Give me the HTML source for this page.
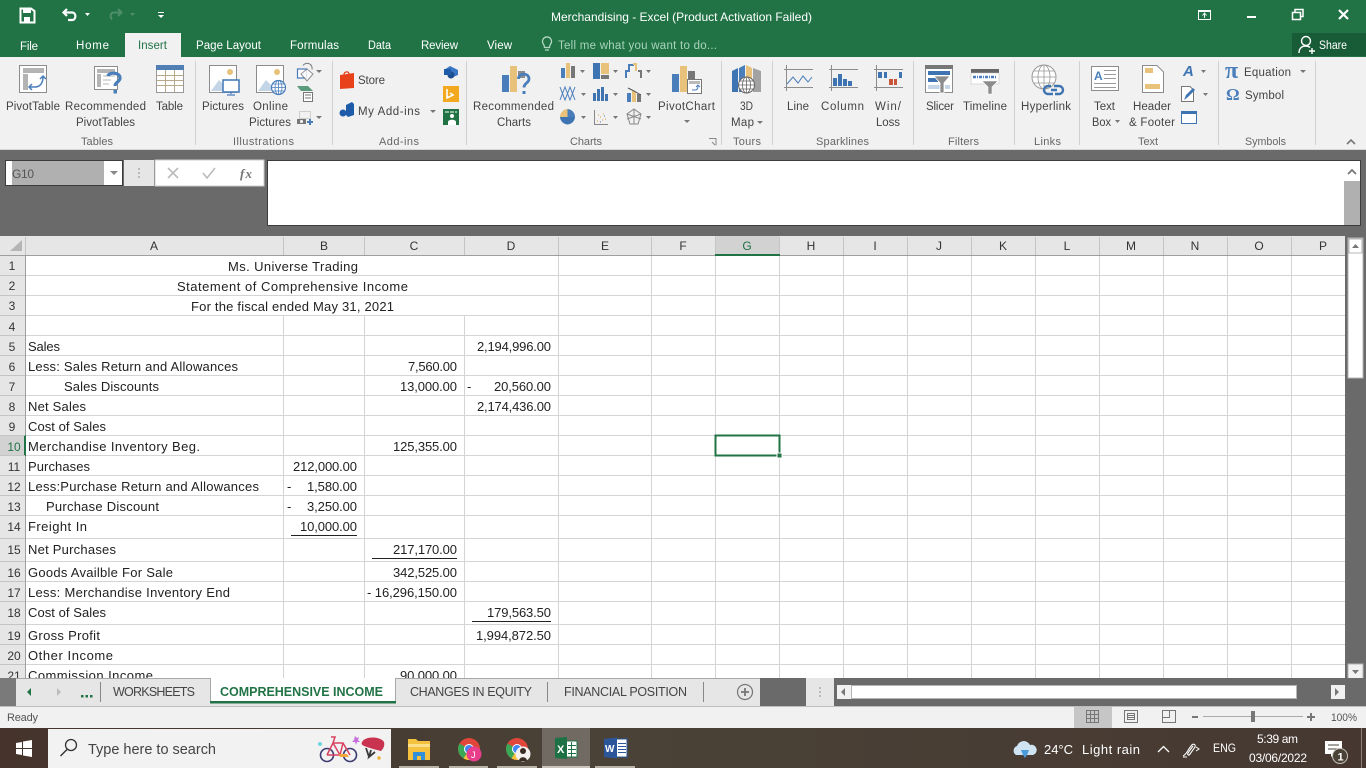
<!DOCTYPE html>
<html><head><meta charset="utf-8"><title>Merchandising - Excel</title>
<style>
html,body{margin:0;padding:0;background:#6a6a6a;width:1366px;height:768px;overflow:hidden}
svg{display:block;position:absolute;left:0;top:0}
text{font-family:"Liberation Sans",sans-serif}
.w{fill:#fff;font-size:12px}
.t{fill:#fff;font-size:11.5px}
.r{fill:#444;font-size:11.5px}
.g{fill:#666;font-size:11px}
.c{fill:#222;font-size:13px}
.h{fill:#333;font-size:12px;text-anchor:middle}
.b{fill:#fff;font-size:14px}
.ln{shape-rendering:crispEdges;fill:none}
</style></head><body>
<svg width="1366" height="768" viewBox="0 0 1366 768" xmlns="http://www.w3.org/2000/svg">
<!-- title bar -->
<rect width="1366" height="57" fill="#217346"/>
<rect y="57" width="1366" height="93" fill="#f1f1f1"/>
<rect y="149" width="1366" height="1" fill="#d8d8d8"/>
<rect y="150" width="1366" height="528" fill="#6a6a6a"/>
<!-- QAT -->
<path d="M20.500 8.500H31L34.500 11V22.500H20.500Z" fill="none" stroke="#fff" stroke-width="2"/>
<rect x="23" y="9" width="8" height="4" fill="#fff"/><rect x="24" y="17" width="6" height="5" fill="#fff"/>
<path d="M67 9L63.500 12.500L67 16M64 12.500H72C76.500 12.500 76.500 20 72 20H68" fill="none" stroke="#fff" stroke-width="2.200"/>
<path d="M85 13h5l-2.500 3z" fill="#fff"/>
<path d="M118 9l3.500 3.500L118 16M121 12.500h-7c-3.500 0-4.500 4-2 7" fill="none" stroke="#4f8e6b" stroke-width="2"/>
<path d="M130 13h5l-2.500 3z" fill="#4f8e6b"/>
<path d="M158 12h6v1h-6zM158 15h6l-3 3z" fill="#fff"/>
<text x="551" y="21" class="w" textLength="261">Merchandising - Excel (Product Activation Failed)</text>
<!-- window buttons -->
<rect x="1198.500" y="10.500" width="12" height="9" fill="none" stroke="#fff"/><rect x="1198" y="10" width="13" height="2" fill="#fff"/><path d="M1204.500 18v-4M1202.500 15.500l2-2.500 2 2.500" fill="none" stroke="#fff"/>
<rect x="1247" y="16" width="9" height="2" fill="#fff"/>
<rect x="1292.500" y="12.500" width="8" height="7" fill="#217346" stroke="#fff" stroke-width="1.500"/><path d="M1295 12v-2.500h8v7h-2.500" fill="none" stroke="#fff" stroke-width="1.500"/>
<path d="M1339 10l9 9M1348 10l-9 9" stroke="#fff" stroke-width="2.200"/>
<!-- tabs -->
<rect x="1292" y="33" width="74" height="23" fill="#185c37"/>
<rect x="125" y="33" width="56" height="24" fill="#f1f1f1"/>
<text x="20" y="50" class="t" textLength="18">File</text>
<text x="76" y="49" class="t" textLength="33">Home</text>
<text x="138" y="49" fill="#217346" font-size="11.500" textLength="29">Insert</text>
<text x="196" y="49" class="t" textLength="65">Page Layout</text>
<text x="290" y="49" class="t" textLength="49">Formulas</text>
<text x="368" y="49" class="t" textLength="23" lengthAdjust="spacingAndGlyphs">Data</text>
<text x="421" y="49" class="t" textLength="37">Review</text>
<text x="487" y="49" class="t" textLength="25">View</text>
<path d="M543 43.500a4.500 4.500 0 1 1 8 0c-1 1.500-1.500 2-1.500 4h-5c0-2-.5-2.500-1.500-4zM545 50h4" fill="none" stroke="#b5d8c4" stroke-width="1.300"/>
<text x="558" y="49" fill="#a9d3bb" font-size="11.500" textLength="159">Tell me what you want to do...</text>
<circle cx="1306" cy="41" r="4.500" fill="none" stroke="#fff" stroke-width="1.400"/><path d="M1299 53c0-5 3-7 7-7 2 0 3 .5 4 1.500M1309 51h6M1312 48v6" fill="none" stroke="#fff" stroke-width="1.400"/>
<text x="1319" y="49" class="t" textLength="28" lengthAdjust="spacingAndGlyphs">Share</text>

<!-- ribbon separators -->
<path class="ln" stroke="#d0d0d0" d="M195.500 61V145M332.500 61V145M466.500 61V145M721.500 61V145M772.500 61V145M913.500 61V145M1014.500 61V145M1079.500 61V145M1218.500 61V145M1315.500 61V145"/>

<!-- ribbon labels -->
<text x="6" y="110" class="r" textLength="54">PivotTable</text>
<text x="65" y="110" class="r" textLength="81">Recommended</text>
<text x="76" y="126" class="r" textLength="59">PivotTables</text>
<text x="156" y="110" class="r" textLength="27">Table</text>
<text x="202" y="110" class="r" textLength="42">Pictures</text>
<text x="253" y="110" class="r" textLength="35">Online</text>
<text x="249" y="126" class="r" textLength="42">Pictures</text>
<text x="358" y="84" class="r" textLength="27">Store</text>
<text x="358" y="115" class="r" textLength="62">My Add-ins</text>
<text x="473" y="110" class="r" textLength="81">Recommended</text>
<text x="497" y="126" class="r" textLength="34">Charts</text>
<text x="658" y="110" class="r" textLength="57">PivotChart</text>
<text x="740" y="110" class="r" textLength="13" lengthAdjust="spacingAndGlyphs">3D</text>
<text x="731" y="126" class="r" textLength="23">Map</text>
<text x="787" y="110" class="r" textLength="22">Line</text>
<text x="821" y="110" class="r" textLength="43">Column</text>
<text x="875" y="110" class="r" textLength="26">Win/</text>
<text x="876" y="126" class="r" textLength="24">Loss</text>
<text x="926" y="110" class="r" textLength="28">Slicer</text>
<text x="963" y="110" class="r" textLength="44">Timeline</text>
<text x="1021" y="110" class="r" textLength="50">Hyperlink</text>
<text x="1094" y="110" class="r" textLength="21">Text</text>
<text x="1092" y="126" class="r" textLength="19" lengthAdjust="spacingAndGlyphs">Box</text>
<text x="1133" y="110" class="r" textLength="38">Header</text>
<text x="1129" y="126" class="r" textLength="46">&amp; Footer</text>
<text x="1244" y="76" class="r" textLength="47">Equation</text>
<text x="1245" y="99" class="r" textLength="39">Symbol</text>
<text x="81" y="145" class="g" textLength="32">Tables</text>
<text x="233" y="145" class="g" textLength="61">Illustrations</text>
<text x="379" y="145" class="g" textLength="40">Add-ins</text>
<text x="570" y="145" class="g" textLength="32">Charts</text>
<text x="733" y="145" class="g" textLength="28">Tours</text>
<text x="816" y="145" class="g" textLength="53">Sparklines</text>
<text x="948" y="145" class="g" textLength="31">Filters</text>
<text x="1034" y="145" class="g" textLength="27">Links</text>
<text x="1138" y="145" class="g" textLength="20">Text</text>
<text x="1245" y="145" class="g" textLength="41" lengthAdjust="spacingAndGlyphs">Symbols</text>

<!-- PivotTable icon -->
<rect x="19.500" y="65.500" width="27" height="27" fill="#fff" stroke="#8c8c8c"/>
<rect x="23" y="68" width="21" height="5" fill="#b4b4b4"/><rect x="23" y="74" width="5" height="16" fill="#b4b4b4"/>
<path d="M29 87h6c5 0 8-4 8-10M40 79l3-3 3 3M32 84l-3 3 3 3" fill="none" stroke="#4a7ebb" stroke-width="1.500"/>
<!-- Recommended Pivot -->
<rect x="94.500" y="66.500" width="23" height="23" fill="#fff" stroke="#8c8c8c"/>
<rect x="97" y="69" width="18" height="4" fill="#b4b4b4"/><rect x="97" y="74" width="4" height="13" fill="#b4b4b4"/><path d="M103 76h12M103 80h8M103 84h6" stroke="#b4b4b4"/>
<path d="M108 76c1-4 12-4 12 2 0 4-5 4-5 8" fill="none" stroke="#4a7ebb" stroke-width="3.200"/><rect x="113.500" y="90" width="3.500" height="3.500" fill="#4a7ebb"/>
<!-- Table icon -->
<rect x="156.500" y="65.500" width="27" height="27" fill="#fff" stroke="#999"/>
<rect x="156" y="65" width="28" height="5" fill="#4f7fb5"/>
<path class="ln" stroke="#b9a98a" d="M157 75.500H183M157 80.500H183M157 85.500H183M165.500 70V92M174.500 70V92"/>
<!-- Pictures -->
<rect x="209.500" y="65.500" width="27" height="27" fill="#fff" stroke="#8c8c8c"/>
<circle cx="230" cy="72" r="3" fill="#e8c27a"/><path d="M211 91l8-11 5 5 5-3 7 9z" fill="#c5d5e8"/>
<rect x="223" y="80" width="16" height="12" fill="#fff" stroke="#4a7ebb" stroke-width="1.600"/><path d="M231 92v2M227 95h8" stroke="#4a7ebb" stroke-width="1.300"/>
<!-- Online pictures -->
<rect x="256.500" y="65.500" width="27" height="27" fill="#fff" stroke="#8c8c8c"/>
<circle cx="277" cy="72" r="3" fill="#e8c27a"/><path d="M258 91l8-11 5 5 4-3 7 9z" fill="#c5d5e8"/>
<circle cx="278.500" cy="87.500" r="7" fill="#fff" stroke="#4a7ebb" stroke-width="1.200"/><path d="M271.500 87.500h14M278.500 80.500v14M273 84h11M273 91h11" stroke="#4a7ebb" stroke-width=".8"/><ellipse cx="278.500" cy="87.500" rx="3.500" ry="7" fill="none" stroke="#4a7ebb" stroke-width=".8"/>
<!-- Shapes -->
<path d="M297.500 69h9v9h-9z" fill="#fff" stroke="#4a7ebb" stroke-width="1.200"/><path d="M307 69l6 5-6 7-6-7z" fill="#fff" stroke="#777" stroke-width="1" opacity=".8"/><path d="M303 65.500a5 5 0 0 1 9 4" fill="none" stroke="#777"/>
<path d="M316 70h6l-3 3z" fill="#777"/>
<!-- Smart art -->
<path d="M297 86h11l5 5h-12z" fill="#5c9a7c"/><rect x="303.500" y="92.500" width="9" height="9" fill="#fff" stroke="#777"/><path d="M305 95h6M305 98h6" stroke="#777"/>
<!-- screenshot -->
<rect x="299.500" y="111.500" width="11" height="7" fill="none" stroke="#aaa" stroke-dasharray="1 1"/>
<path d="M297 119h9v5h-9z" fill="#777"/><circle cx="301.500" cy="121.500" r="1.500" fill="#fff"/><path d="M307 122h6M310 119v6" stroke="#4a7ebb" stroke-width="2"/>
<path d="M316 116h6l-3 3z" fill="#777"/>
<!-- Store -->
<path d="M340 75l14-2v15l-14 1z" fill="#e8421b"/><path d="M344 75c0-4 5-4 5-1" fill="none" stroke="#e8421b" stroke-width="1.300"/>
<!-- My Addins -->
<path d="M346 105l6-3 2 2v11l-6 2-2-2z" fill="#1e5ba8"/><circle cx="343" cy="113" r="3.500" fill="#1e5ba8"/>
<path d="M430 110h6l-3 3z" fill="#777"/>
<!-- Visio/Bing/People -->
<path d="M444 70l6-4 8 4v5l-5 2-5-2z" fill="#3b76c4"/><circle cx="451" cy="75" r="3.500" fill="#1e4c8f"/><path d="M444 69h7v6h-7z" fill="#1e5ba8"/>
<rect x="443" y="86" width="16" height="16" fill="#f2a81f"/><path d="M447 89v9l6-3-3-2" fill="none" stroke="#fff" stroke-width="1.600"/>
<rect x="443" y="109" width="16" height="16" fill="#217346"/><path d="M445 112h12" stroke="#fff" stroke-dasharray="4 1"/><circle cx="452" cy="116" r="2" fill="#fff"/><path d="M448 125v-3c0-3 8-3 8 0v3z" fill="#fff"/>
<!-- Rec charts -->
<rect x="502" y="75" width="7" height="17" fill="#4a7ebb"/><rect x="510" y="66" width="7" height="26" fill="#e8c27a"/><rect x="518" y="71" width="7" height="7" fill="#8c8c8c"/>
<path d="M518.500 79c0-6.500 10.500-6.500 10.500 0 0 4-5 4-5 8.500" fill="none" stroke="#4a7ebb" stroke-width="2.800"/><rect x="522.500" y="91" width="3" height="3" fill="#4a7ebb"/>
<!-- chart minis row 1 -->
<rect x="561" y="68" width="4" height="10" fill="#4a7ebb"/><rect x="566" y="63" width="4" height="15" fill="#e8c27a"/><rect x="571" y="66" width="4" height="12" fill="#777"/><path d="M580 70h5l-2.500 3z" fill="#777"/>
<rect x="593" y="63" width="7" height="16" fill="#3f74b3"/><rect x="601" y="63" width="8" height="11" fill="#e8c27a"/><rect x="601" y="75" width="8" height="4" fill="#777"/><path d="M613 70h5l-2.500 3z" fill="#777"/>
<path d="M626 78v-7h3v-6h4v-1" fill="none" stroke="#4a7ebb" stroke-width="2"/><path d="M633 64h3v7" fill="none" stroke="#e8c27a" stroke-width="2"/><path d="M638 71h3v7" fill="none" stroke="#777" stroke-width="2"/><path d="M646 70h5l-2.500 3z" fill="#777"/>
<!-- row 2 -->
<path d="M560 87l5 13 5-13 5 13M560 100l5-13 5 13 5-13" fill="none" stroke="#4a7ebb" stroke-width="1"/><path d="M581 93h5l-2.500 3z" fill="#777"/>
<rect x="593" y="93" width="3" height="8" fill="#3f74b3"/><rect x="597" y="89" width="3" height="12" fill="#3f74b3"/><rect x="601" y="87" width="3" height="14" fill="#3f74b3"/><rect x="605" y="94" width="3" height="7" fill="#3f74b3"/><path d="M613 93h5l-2.500 3z" fill="#777"/>
<rect x="627" y="93" width="4" height="9" fill="#4a7ebb"/><rect x="632" y="91" width="4" height="11" fill="#e8c27a"/><rect x="637" y="94" width="4" height="8" fill="#777"/><path d="M628 88l6 3 7 4" fill="none" stroke="#555"/><path d="M646 93h5l-2.500 3z" fill="#777"/>
<!-- row 3 -->
<path d="M567.500 117L567.500 109A8 8 0 0 1 575 117Z" fill="#4a7ebb"/><path d="M567.500 117V109A8 8 0 0 0 560 117Z" fill="#e8c27a"/><path d="M567.500 117H560A8 8 0 0 0 567.500 124.500A8 8 0 0 0 575 117Z" fill="#3f74b3"/><path d="M581 116h5l-2.500 3z" fill="#777"/>
<path d="M594.500 110v14.500H608" fill="none" stroke="#888"/><path d="M597 121h1M600 117h1M603 114h1M605 119h1M598 115h1M602 120h1" stroke="#e09a3c"/><path d="M600 122h1M604 116h1" stroke="#4a7ebb"/><path d="M613 116h5l-2.500 3z" fill="#777"/>
<path d="M634 109l7 5-3 10h-8l-3-10zM634 109v15M627 114l14 5M641 114l-14 5" fill="none" stroke="#888"/><path d="M646 116h5l-2.500 3z" fill="#777"/>
<!-- PivotChart -->
<rect x="672" y="74" width="7" height="18" fill="#4a7ebb"/><rect x="680" y="66" width="7" height="26" fill="#e8c27a"/><rect x="688" y="71" width="7" height="10" fill="#777"/>
<rect x="687.500" y="79.500" width="14" height="14" fill="#fff" stroke="#777"/><rect x="689" y="81" width="11" height="3" fill="#bbb"/><path d="M692 90h3c2 0 3-1 3-4M696 87l2-2 2 2" fill="none" stroke="#4a7ebb"/>
<path d="M684 120h6l-3 3z" fill="#777"/>
<!-- 3D Map -->
<path d="M732 71l6-3v24h-6z" fill="#3f74b3"/><path d="M739 68l6-3v27h-6z" fill="#4a7ebb"/><path d="M746 65l6 3v24h-6z" fill="#e8c27a"/><path d="M753 68l8 3v21h-8z" fill="#a2a2a2"/>
<circle cx="746.500" cy="85" r="8" fill="#fff" stroke="#666"/><path d="M738.500 85h16M746.500 77v16M740 81h13M740 89h13" stroke="#666" stroke-width=".8"/><ellipse cx="746.500" cy="85" rx="4" ry="8" fill="none" stroke="#666" stroke-width=".8"/>
<path d="M757 121h6l-3 3z" fill="#777"/>
<!-- Sparkline line -->
<path class="ln" stroke="#8c8c8c" d="M784 69.500H813M784 87.500H813M786.500 65V91"/>
<path d="M787 84l6-7 5 6 5-7 5 6 4-5" fill="none" stroke="#4a7ebb" stroke-width="1"/>
<path class="ln" stroke="#8c8c8c" d="M829 69.500H858M829 87.500H858M831.500 65V91"/>
<rect x="833" y="78" width="4" height="8" fill="#3f74b3"/><rect x="838" y="74" width="4" height="12" fill="#3f74b3"/><rect x="843" y="79" width="4" height="7" fill="#3f74b3"/><rect x="848" y="81" width="4" height="5" fill="#3f74b3"/>
<path class="ln" stroke="#8c8c8c" d="M874 69.500H903M874 87.500H903M876.500 65V91"/>
<rect x="878" y="72" width="4" height="6" fill="#3f74b3"/><rect x="884" y="72" width="3" height="6" fill="#3f74b3"/><rect x="889" y="79" width="4" height="6" fill="#c8553a"/><rect x="894" y="79" width="3" height="6" fill="#c8553a"/><rect x="899" y="72" width="3" height="6" fill="#3f74b3"/>
<!-- Slicer -->
<rect x="925.500" y="65.500" width="27" height="27" fill="#fff" stroke="#8c8c8c"/><rect x="925" y="65" width="28" height="4" fill="#777"/>
<rect x="928" y="71" width="22" height="4" fill="#3f74b3"/><rect x="928" y="78" width="10" height="4" fill="#3f74b3"/><rect x="928" y="85" width="14" height="4" fill="#c5d5e8"/><rect x="945" y="85" width="5" height="4" fill="#c5d5e8"/>
<path d="M934 76h16l-6 7v10h-4V83z" fill="#8c8c8c" stroke="#fff" stroke-width=".8"/>
<!-- Timeline -->
<rect x="971" y="69" width="28" height="4" fill="#666"/><rect x="971" y="73" width="28" height="11" fill="#fff" stroke="#bbb" stroke-width=".5"/><path d="M973 77h5M979 77h5M985 77h5M991 77h5" stroke="#4a7ebb" stroke-width="2.500" stroke-dasharray="3 1"/>
<path d="M982 81h16l-6 6v7h-4v-7z" fill="#8c8c8c" stroke="#fff" stroke-width=".6"/>
<!-- Hyperlink -->
<circle cx="1044" cy="77" r="12" fill="#fff" stroke="#999"/><path d="M1032 77h24M1044 65v24M1034 71h20M1034 83h20" stroke="#999" stroke-width=".8"/><ellipse cx="1044" cy="77" rx="6" ry="12" fill="none" stroke="#999" stroke-width=".8"/>
<path d="M1051 86h-3a4 4 0 0 0 0 8h5M1054 86h5a4 4 0 0 1 0 8h-4M1051 90h6" fill="none" stroke="#3f74b3" stroke-width="2.400"/>
<!-- Text box -->
<rect x="1091.500" y="66.500" width="27" height="24" fill="#fff" stroke="#8c8c8c"/>
<text x="1094" y="80" fill="#4a7ebb" font-size="12" font-weight="bold">A</text>
<path class="ln" stroke="#999" d="M1104 70.500H1116M1104 74.500H1116M1104 78.500H1116M1094 83.500H1116M1094 87.500H1116"/>
<!-- Header -->
<path d="M1142.500 65.500H1157L1163.500 72V92.500H1142.500Z" fill="#fff" stroke="#8c8c8c"/>
<rect x="1145" y="68" width="8" height="5" fill="#e8c27a"/><rect x="1145" y="84" width="15" height="5" fill="#e8c27a"/>
<!-- wordart etc -->
<text x="1183" y="76" fill="#3f74b3" font-size="15" font-weight="bold" font-style="italic">A</text><path d="M1201 70h5l-2.500 3z" fill="#777"/>
<path d="M1181.500 86.500H1190L1193.500 90V101.500H1181.500Z" fill="#fff" stroke="#777"/><path d="M1184 100l2-5 7-7 2 2-7 7z" fill="#3f74b3"/><path d="M1203 93h5l-2.500 3z" fill="#777"/>
<rect x="1181.500" y="111.500" width="15" height="12" fill="#fff" stroke="#3f74b3"/><rect x="1181" y="111" width="16" height="3" fill="#3f74b3"/>
<path d="M1115 120h5l-2.500 3z" fill="#777"/>
<!-- symbols -->
<text x="1225" y="78" fill="#4a7ebb" font-size="24" font-weight="bold" style="font-family:'Liberation Serif',serif">π</text>
<text x="1226" y="100" fill="#4a7ebb" font-size="17" font-weight="bold" style="font-family:'Liberation Serif',serif">Ω</text>
<path d="M1300 70h6l-3 3z" fill="#777"/>
<path d="M1347 144l4-4 4 4" fill="none" stroke="#777" stroke-width="1.600"/>
<path d="M709 138.500h7v7M712 142l3 3" fill="none" stroke="#888"/>

<!-- formula bar -->
<rect x="5.500" y="160.500" width="117" height="25" fill="#fff" stroke="#3c3c3c"/>
<rect x="12" y="161" width="92" height="24" fill="#b0b0b0"/>
<text x="12" y="178" fill="#555" font-size="12" textLength="22">G10</text>
<path d="M110 171h8l-4 4z" fill="#888"/>
<rect x="124" y="160" width="30" height="26" fill="#e6e6e6"/>
<path d="M139 168v2M139 172v2M139 176v2" stroke="#aaa" stroke-width="1.500"/>
<rect x="155" y="160" width="109" height="26" fill="#fff" stroke="#ccc"/>
<path d="M168 168l10 10M178 168l-10 10" stroke="#bbb" stroke-width="1.600"/>
<path d="M203 173l4 5 8-10" fill="none" stroke="#bbb" stroke-width="1.600"/>
<text x="240" y="178" fill="#777" font-size="13" font-style="italic" font-weight="bold" style="font-family:'Liberation Serif',serif" textLength="12">fx</text>
<rect x="267.500" y="160.500" width="1093" height="65" fill="#fff" stroke="#3c3c3c"/>
<rect x="1344" y="161" width="16" height="20" fill="#fff"/>
<rect x="1344" y="181" width="16" height="44" fill="#b0b0b0"/>
<path d="M1348 174l4-4 4 4" fill="none" stroke="#777" stroke-width="1.800"/>

<!-- sheet -->
<rect x="0" y="236" width="1345" height="19" fill="#e6e6e6"/>
<rect x="0" y="255" width="25" height="423" fill="#e6e6e6"/>
<rect x="25" y="255" width="1320" height="423" fill="#fff"/>
<path d="M22 240v11H10z" fill="#b5b5b5"/>
<rect x="715" y="236" width="64" height="19" fill="#d2d2d2"/>
<rect x="715" y="254" width="65" height="2" fill="#217346"/>
<rect x="0" y="435" width="25" height="20" fill="#d2d2d2"/>
<rect x="24" y="435" width="2" height="21" fill="#217346"/>
<!-- grid -->
<path class="ln" stroke="#d4d4d4" d="M25 275.500H1345M25 295.500H1345M25 315.500H1345M25 335.500H1345M25 355.500H1345M25 375.500H1345M25 395.500H1345M25 415.500H1345M25 435.500H1345M25 455.500H1345M25 475.500H1345M25 495.500H1345M25 515.500H1345M25 538.500H1345M25 561.500H1345M25 581.500H1345M25 601.500H1345M25 624.500H1345M25 644.500H1345M25 664.500H1345M283.500 315V678M364.500 315V678M464.500 315V678M558.500 255V678M651.500 255V678M715.500 255V678M779.500 255V678M843.500 255V678M907.500 255V678M971.500 255V678M1035.500 255V678M1099.500 255V678M1163.500 255V678M1227.500 255V678M1291.500 255V678"/>
<path class="ln" stroke="#c4c4c4" d="M283.500 237V255M364.500 237V255M464.500 237V255M558.500 237V255M651.500 237V255M715.500 237V255M779.500 237V255M843.500 237V255M907.500 237V255M971.500 237V255M1035.500 237V255M1099.500 237V255M1163.500 237V255M1227.500 237V255M1291.500 237V255M25.500 237V255M0 275.500H25M0 295.500H25M0 315.500H25M0 335.500H25M0 355.500H25M0 375.500H25M0 395.500H25M0 415.500H25M0 435.500H25M0 455.500H25M0 475.500H25M0 495.500H25M0 515.500H25M0 538.500H25M0 561.500H25M0 581.500H25M0 601.500H25M0 624.500H25M0 644.500H25M0 664.500H25"/>
<path class="ln" stroke="#9f9f9f" d="M0 255.500H1345M25.500 255V678"/>
<rect x="715" y="254" width="65" height="2" fill="#217346"/>
<rect x="25" y="435" width="1" height="21" fill="#217346"/>
<!-- col headers -->
<text x="154" y="250" class="h">A</text><text x="324" y="250" class="h">B</text><text x="414" y="250" class="h">C</text><text x="511" y="250" class="h">D</text><text x="605" y="250" class="h">E</text><text x="683" y="250" class="h">F</text><text x="747" y="250" class="h" style="fill:#217346">G</text><text x="811" y="250" class="h">H</text><text x="875" y="250" class="h">I</text><text x="939" y="250" class="h">J</text><text x="1003" y="250" class="h">K</text><text x="1067" y="250" class="h">L</text><text x="1131" y="250" class="h">M</text><text x="1195" y="250" class="h">N</text><text x="1259" y="250" class="h">O</text><text x="1323" y="250" class="h">P</text>
<!-- row headers -->
<text x="12" y="270" class="h">1</text><text x="12" y="290" class="h">2</text><text x="12" y="310" class="h">3</text><text x="12" y="331" class="h">4</text><text x="12" y="351" class="h">5</text><text x="12" y="371" class="h">6</text><text x="12" y="391" class="h">7</text><text x="12" y="411" class="h">8</text><text x="12" y="431" class="h">9</text><text x="14" y="451" class="h" style="fill:#217346">10</text><text x="14" y="471" class="h">11</text><text x="14" y="491" class="h">12</text><text x="14" y="511" class="h">13</text><text x="14" y="531" class="h">14</text><text x="14" y="554" class="h">15</text><text x="14" y="577" class="h">16</text><text x="14" y="597" class="h">17</text><text x="14" y="617" class="h">18</text><text x="14" y="640" class="h">19</text><text x="14" y="660" class="h">20</text>
<!-- cells -->
<text x="228" y="271" class="c" textLength="130">Ms. Universe Trading</text>
<text x="177" y="291" class="c" textLength="231">Statement of Comprehensive Income</text>
<text x="191" y="311" class="c" textLength="203">For the fiscal ended May 31, 2021</text>
<text x="28" y="351" class="c" textLength="32">Sales</text>
<text x="477" y="351" class="c" textLength="74">2,194,996.00</text>
<text x="28" y="371" class="c" textLength="210">Less: Sales Return and Allowances</text>
<text x="408" y="371" class="c" textLength="49">7,560.00</text>
<text x="64" y="391" class="c" textLength="95">Sales Discounts</text>
<text x="400" y="391" class="c" textLength="57">13,000.00</text>
<text x="467" y="391" class="c">-</text>
<text x="494" y="391" class="c" textLength="57">20,560.00</text>
<text x="28" y="411" class="c" textLength="58">Net Sales</text>
<text x="477" y="411" class="c" textLength="74">2,174,436.00</text>
<text x="28" y="431" class="c" textLength="78">Cost of Sales</text>
<text x="28" y="451" class="c" textLength="172">Merchandise Inventory Beg.</text>
<text x="393" y="451" class="c" textLength="64">125,355.00</text>
<text x="28" y="471" class="c" textLength="62">Purchases</text>
<text x="293" y="471" class="c" textLength="64">212,000.00</text>
<text x="28" y="491" class="c" textLength="231">Less:Purchase Return and Allowances</text>
<text x="287" y="491" class="c">-</text>
<text x="307" y="491" class="c" textLength="50">1,580.00</text>
<text x="46" y="511" class="c" textLength="113">Purchase Discount</text>
<text x="287" y="511" class="c">-</text>
<text x="307" y="511" class="c" textLength="50">3,250.00</text>
<text x="28" y="531" class="c" textLength="59">Freight In</text>
<text x="300" y="531" class="c" textLength="57">10,000.00</text>
<rect x="291" y="535" width="66" height="1" fill="#222"/>
<text x="28" y="554" class="c" textLength="88">Net Purchases</text>
<text x="393" y="554" class="c" textLength="64">217,170.00</text>
<rect x="372" y="558" width="85" height="1" fill="#222"/>
<text x="28" y="577" class="c" textLength="145">Goods Availble For Sale</text>
<text x="393" y="577" class="c" textLength="64">342,525.00</text>
<text x="28" y="597" class="c" textLength="202">Less: Merchandise Inventory End</text>
<text x="367" y="597" class="c" textLength="90">- 16,296,150.00</text>
<text x="28" y="617" class="c" textLength="78">Cost of Sales</text>
<text x="487" y="617" class="c" textLength="64">179,563.50</text>
<rect x="472" y="621" width="79" height="1" fill="#222"/>
<text x="28" y="640" class="c" textLength="72">Gross Profit</text>
<text x="476" y="640" class="c" textLength="75">1,994,872.50</text>
<text x="28" y="660" class="c" textLength="85">Other Income</text>
<text x="14" y="680" class="h">21</text>
<text x="28" y="680" class="c" textLength="125">Commission Income</text>
<text x="400" y="680" class="c" textLength="57">90,000.00</text>
<!-- selection -->
<rect x="715.500" y="435.500" width="64" height="20" fill="none" stroke="#217346" stroke-width="2" shape-rendering="crispEdges"/>
<rect x="777" y="453" width="5" height="5" fill="#217346" stroke="#fff"/>

<!-- right scrollbar -->
<rect x="1345" y="236" width="21" height="442" fill="#6a6a6a"/>
<rect x="1348" y="238" width="15" height="140" fill="#fff" stroke="#b5b5b5"/>
<rect x="1349" y="239" width="13" height="14" fill="#fff" stroke="#b5b5b5"/>
<path d="M1352 248l3.500-4 3.500 4z" fill="#777"/>
<rect x="1348" y="664" width="15" height="15" fill="#f1f1f1" stroke="#b5b5b5"/>
<path d="M1352 670h7l-3.500 4z" fill="#777"/>

<!-- tab bar -->
<rect x="0" y="678" width="1366" height="28" fill="#6a6a6a"/>
<rect x="16" y="678" width="744" height="28" fill="#e6e6e6"/>
<rect x="0" y="678" width="16" height="28" fill="#7a7a7a"/>
<rect x="16" y="678" width="744" height="1" fill="#a8a8a8"/>
<rect x="0" y="706" width="1366" height="1" fill="#bdbdbd"/>
<path d="M31 688v8l-4-4z" fill="#217346"/><path d="M57 688v8l4-4z" fill="#bbb"/>
<path d="M81 695h2.500v2.500H81zM85.500 695H88v2.500h-2.500zM90 695h2.500v2.500H90z" fill="#217346"/>
<rect x="100" y="682" width="1" height="20" fill="#888"/><rect x="547" y="682" width="1" height="20" fill="#888"/><rect x="703" y="682" width="1" height="20" fill="#888"/>
<text x="113" y="696" fill="#444" font-size="12.500" textLength="82">WORKSHEETS</text>
<rect x="210" y="678" width="185" height="25" fill="#fff"/>
<rect x="210" y="678" width="1" height="25" fill="#a8a8a8"/><rect x="395" y="678" width="1" height="25" fill="#a8a8a8"/>
<rect x="210" y="701" width="186" height="2.500" fill="#217346"/>
<text x="220" y="696" fill="#217346" font-size="12.500" font-weight="bold" textLength="163">COMPREHENSIVE INCOME</text>
<text x="410" y="696" fill="#444" font-size="12.500" textLength="122">CHANGES IN EQUITY</text>
<text x="564" y="696" fill="#444" font-size="12.500" textLength="123">FINANCIAL POSITION</text>
<circle cx="745" cy="692" r="7.500" fill="none" stroke="#777" stroke-width="1.200"/><path d="M741 692h8M745 688v8" stroke="#777" stroke-width="1.800"/>
<rect x="806" y="678" width="28" height="28" fill="#e6e6e6"/>
<path d="M820 687v2M820 691v2M820 695v2" stroke="#aaa" stroke-width="1.500"/>
<rect x="837" y="685" width="14" height="14" fill="#f1f1f1"/><path d="M845 688v8l-4-4z" fill="#777"/>
<rect x="851.500" y="685.500" width="445" height="13" fill="#fff" stroke="#b5b5b5"/>
<rect x="1331" y="685" width="14" height="14" fill="#f1f1f1"/><path d="M1335 688v8l4-4z" fill="#777"/>

<!-- status -->
<rect x="0" y="707" width="1366" height="21" fill="#f1f1f1"/>
<text x="7" y="721" fill="#555" font-size="11" textLength="31">Ready</text>
<rect x="1074" y="707" width="38" height="21" fill="#c6c6c6"/>
<path class="ln" stroke="#777" d="M1086.500 710.500H1098.500V722.500H1086.500ZM1086 714.500H1099M1086 718.500H1099M1090.500 710V723M1094.500 710V723"/>
<path class="ln" stroke="#777" d="M1124.500 710.500H1137.500V722.500H1124.500ZM1127.500 713.500H1134.500V719.500H1127.500ZM1128 715.500H1134M1128 717.500H1134"/>
<path class="ln" stroke="#777" d="M1162.500 710.500H1175.500V722.500H1162.500ZM1169.500 710V717M1162 717.500H1170"/>
<rect x="1192" y="716" width="6" height="2" fill="#777"/>
<rect x="1203" y="716" width="100" height="1" fill="#aaa"/>
<rect x="1251" y="711" width="4" height="11" fill="#777"/>
<path d="M1307 717h8M1311 713v8" stroke="#777" stroke-width="2"/>
<text x="1331" y="721" fill="#555" font-size="11" textLength="26" lengthAdjust="spacingAndGlyphs">100%</text>

<!-- taskbar -->
<defs><linearGradient id="tb" x1="0" x2="1" y1="0" y2="0"><stop offset="0" stop-color="#45332c"/><stop offset=".45" stop-color="#4a4237"/><stop offset="1" stop-color="#463831"/></linearGradient></defs>
<rect y="728" width="1366" height="40" fill="url(#tb)"/>
<path d="M16 743l6-1v6h-6zM23 741.500l9-1.500v8h-9zM16 749h6v6l-6-1zM23 749h9v8l-9-1.500z" fill="#fff"/>
<rect x="48" y="729" width="343" height="39" fill="#f2f2f2"/>
<circle cx="71" cy="745" r="5.500" fill="none" stroke="#333" stroke-width="1.300"/><path d="M67 749.500l-6.500 6.500" stroke="#333" stroke-width="1.400"/>
<text x="88" y="754" fill="#444" font-size="14.500" textLength="128">Type here to search</text>
<!-- bike art -->
<circle cx="327" cy="755" r="6.500" fill="none" stroke="#3c3a70" stroke-width="1.600"/><circle cx="350" cy="755" r="6.500" fill="none" stroke="#3c3a70" stroke-width="1.600"/>
<path d="M327 755l6-12h10l7 12M333 743l7 12h-13M343 743l-3 12M331 737h4l-2 6" fill="none" stroke="#d8405f" stroke-width="1.500"/>
<path d="M339 754h8l2 3h-9z" fill="#f0a83a"/>
<circle cx="320" cy="744" r="2" fill="#6fd4e0"/><path d="M355 736l2 2 2-1-1 3 2 2-3 0-1 3-1-3-3 0 2-2z" fill="#c86fe0"/>
<path d="M362 742c3-6 18-6 22 0 1 4-1 7-3 9l-8-2-9-3c-2-1-3-2-2-4z" fill="#c9334f"/><path d="M366 748l3 9M371 750l-2 7 6-5" fill="none" stroke="#3a3a3a" stroke-width="1.800"/><circle cx="379" cy="758" r="1.700" fill="#f0b030"/>
<!-- explorer -->
<path d="M408 739h8l2 2h12v19h-22z" fill="#f4c23e"/><rect x="408" y="744" width="22" height="3" fill="#fde08a"/>
<rect x="413" y="752" width="12" height="8" fill="#2f8fd8"/><rect x="417" y="756" width="4" height="4" fill="#f4c23e"/>
<path d="M399 767h40M449 767h39M497 767h40M595 767h40" stroke="#b8b2a8" stroke-width="2"/>
<!-- chrome 1 -->
<circle cx="469" cy="749" r="11" fill="#e0463a"/><path d="M469 749L478.500 754.500A11 11 0 0 1 463.500 758.500Z" fill="#f5c33b"/><path d="M469 749L463.500 758.500A11 11 0 0 1 459.500 743.500Z" fill="#3aa757"/><circle cx="469" cy="749" r="5" fill="#fff"/><circle cx="469" cy="749" r="4" fill="#4285f4"/>
<circle cx="474" cy="754" r="7.500" fill="#e83e8c"/><text x="471" y="758" fill="#fff" font-size="9">J</text>
<!-- chrome 2 -->
<circle cx="517" cy="749" r="11" fill="#e0463a"/><path d="M517 749L526.500 754.500A11 11 0 0 1 511.500 758.500Z" fill="#f5c33b"/><path d="M517 749L511.500 758.500A11 11 0 0 1 507.500 743.500Z" fill="#3aa757"/><circle cx="517" cy="749" r="5" fill="#fff"/><circle cx="517" cy="749" r="4" fill="#4285f4"/>
<circle cx="523" cy="754" r="7.500" fill="#f3f0ee"/><circle cx="523" cy="751" r="3" fill="#3a2a24"/><path d="M519 761c0-5 8-5 8 0z" fill="#3a2a24"/>
<!-- excel -->
<rect x="542" y="728" width="48" height="40" fill="#706a62"/>
<rect x="542" y="766" width="48" height="2" fill="#c8c4bc"/>
<rect x="558" y="741" width="19" height="16" fill="#fff" stroke="#1e7145"/><path class="ln" stroke="#1e7145" d="M568 745.500H576M568 749.500H576M568 753.500H576M571.500 742V757"/>
<path d="M555 738l12-1v22l-12-1z" fill="#1e7145"/><text x="557" y="753" fill="#fff" font-size="11" font-weight="bold">X</text>
<!-- word -->
<rect x="612" y="739" width="15" height="18" fill="#fff" stroke="#2b579a"/><path class="ln" stroke="#2b579a" d="M618 743.500H626M618 746.500H626M618 749.500H626M618 752.500H626"/>
<path d="M604 739l13-1.500v21L604 757z" fill="#2b579a"/><text x="605" y="752" fill="#fff" font-size="10" font-weight="bold">W</text>
<!-- tray -->
<path d="M1016 755a5 5 0 0 1 1-9 7 7 0 0 1 13-1 5 5 0 0 1 3 10z" fill="#cfe3f3"/><path d="M1021 750h8l-2 5-2 3-2-3z" fill="#4a9bd8"/>
<text x="1044" y="754" class="b" style="font-size:13px" textLength="29">24°C</text>
<text x="1082" y="754" class="b" style="font-size:13px" textLength="58">Light rain</text>
<path d="M1158 752l5.500-5.500 5.500 5.500" fill="none" stroke="#fff" stroke-width="1.300"/>
<path d="M1183 756c4-2 4-5 8-10 2-3 5-2 4 1l-5 7c-1 2-3 1-2-1l5-7" fill="none" stroke="#fff" stroke-width="1.100"/><path d="M1196 747l3 2-3 2M1183 757h4" fill="none" stroke="#fff"/>
<text x="1213" y="752" class="b" style="font-size:11.500px" textLength="23" lengthAdjust="spacingAndGlyphs">ENG</text>
<text x="1257" y="743" class="b" style="font-size:12px" textLength="41">5:39 am</text>
<text x="1249" y="762" class="b" style="font-size:12px" textLength="58">03/06/2022</text>
<path d="M1325 741h17v13h-8l-3 3v-3h-6z" fill="#fff"/><path d="M1328 745h11M1328 749h11" stroke="#4a4237"/>
<circle cx="1340" cy="756" r="7.500" fill="#4a4237" stroke="#c8c4bc"/><text x="1337.500" y="760.500" fill="#fff" font-size="11" font-weight="bold">1</text>
<rect x="1361" y="728" width="1" height="40" fill="#8a8078"/>
</svg>
</body></html>
